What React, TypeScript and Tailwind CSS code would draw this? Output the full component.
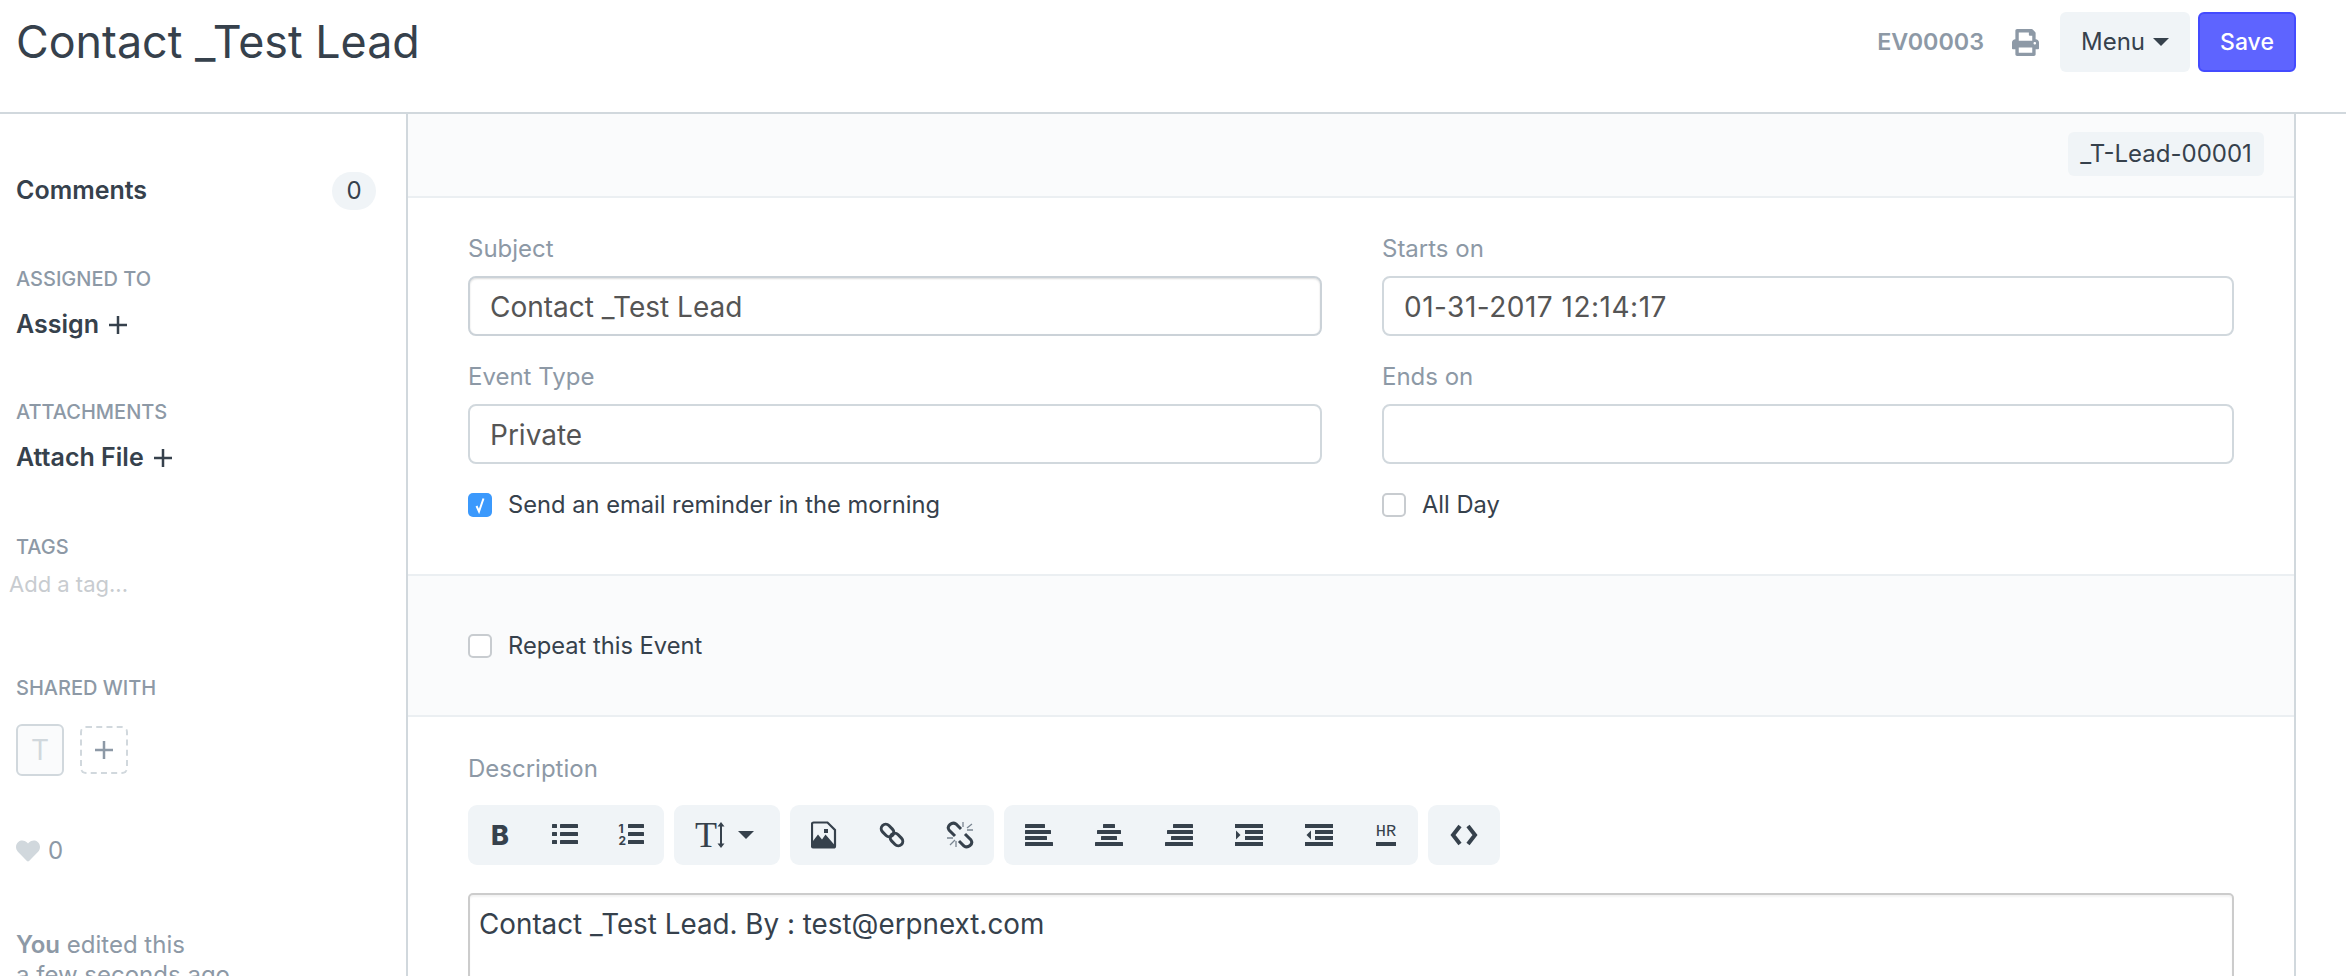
import React from 'react';
import { FaPrint, FaHeart } from 'react-icons/fa';

const Lines = ({ rows, w = 28 }: { rows: number[][]; w?: number }) => (
  <svg width={w} height="24" viewBox={`0 0 ${w} 24`} fill="#36414c">
    {rows.map((r, i) => (
      <rect key={i} x={r[0]} y={r[1]} width={r[2]} height={r[3] ?? 4} rx="0.5" />
    ))}
  </svg>
);

const IndentIcon = ({ left }: { left?: boolean }) => (
  <svg width="28" height="24" viewBox="0 0 28 24" fill="#36414c">
    <rect x="0" y="1" width="28" height="4" />
    <rect x="10" y="7" width="18" height="4" />
    <rect x="10" y="13" width="18" height="4" />
    <rect x="0" y="19" width="28" height="4" />
    {left ? <path d="M6 7.500v9L1.500 12z" /> : <path d="M1 7.500v9L5.500 12z" />}
  </svg>
);

const ImageIcon = () => (
  <svg width="26" height="28" viewBox="0 0 26 28" fill="none">
    <path d="M2.500 1.500h14l7.500 7.500v16q0 1.500-1.500 1.500h-20q-1.500 0-1.500-1.500v-22q0-1.500 1.500-1.500z" stroke="#36414c" strokeWidth="2.200" />
    <path d="M2 26v-6l5-6.500 4 5 3.500-5 9.500 11v1.500z" fill="#36414c" />
    <rect x="13" y="8" width="4" height="4" fill="#36414c" />
  </svg>
);

const LinkIcon = () => (
  <svg width="26" height="26" viewBox="0 0 26 26" fill="none" stroke="#36414c" strokeWidth="3">
    <rect x="1.500" y="4" width="14" height="9" rx="4.500" transform="rotate(45 8.500 8.500)" />
    <rect x="10.500" y="13" width="14" height="9" rx="4.500" transform="rotate(45 17.500 17.500)" />
  </svg>
);

const UnlinkIcon = () => (
  <svg width="28" height="28" viewBox="0 0 28 28" fill="none">
    <path d="M9 15L3 9Q1 6 4 3.500Q7 1 10 3L15 8" stroke="#36414c" strokeWidth="3" />
    <path d="M19 13L25 19Q27 22 24 24.500Q21 27 18 25L13 20" stroke="#36414c" strokeWidth="3" />
    <path d="M17 1v5M21 7l5-4M21 9h6M1 17h6M4 24l5-5M10 20v6" stroke="#7a8591" strokeWidth="1.300" />
  </svg>
);

const CodeIcon = () => (
  <svg width="28" height="22" viewBox="0 0 28 22" fill="none" stroke="#36414c" strokeWidth="4">
    <path d="M10 2L3 11l7 9" />
    <path d="M18 2l7 9-7 9" />
  </svg>
);

const TextHeight = () => (
  <div className="flex items-center">
    <span className="font-['Liberation_Serif',serif] text-[36px] leading-none text-[#36414c]">T</span>
    <svg width="8" height="26" viewBox="0 0 8 26" fill="#36414c">
      <path d="M4 0l3.500 4.500H5v17h2.500L4 26 .5 21.500H3v-17H.5z" />
    </svg>
  </div>
);

const Btn = ({ w, children }: { w: string; children: React.ReactNode }) => (
  <div className={`${w} flex h-full items-center justify-center`}>{children}</div>
);

const Group = ({ w, children }: { w: string; children: React.ReactNode }) => (
  <div className={`${w} flex h-[60px] items-center rounded-[9px] bg-[#f0f4f7]`}>{children}</div>
);

const Field = ({ label, value, focused, wide }: { label: string; value: string; focused?: boolean; wide?: boolean }) => (
  <div>
    <div className="h-[30px] text-[24px] leading-[30px] text-[#8d99a6]">{label}</div>
    <input
      readOnly
      value={value}
      className={`mt-[12px] block h-[60px] w-full rounded-[8px] border-2 bg-white px-[20px] pt-[2px] text-[28px] text-[#555] outline-none ${wide ? 'tracking-[0.5px]' : ''} ${focused ? 'border-[#cbd2d8] shadow-[inset_0_1px_2px_rgba(0,0,0,0.14)]' : 'border-[#d1d8dd]'}`}
    />
  </div>
);

const Check = ({ checked, label, className }: { checked?: boolean; label: string; className?: string }) => (
  <div className={`flex h-[30px] items-center ${className ?? ''}`}>
    {checked ? (
      <span className="flex h-[24px] w-[24px] items-center justify-center rounded-[5px] bg-[#3b99fc]">
        <svg width="14" height="18" viewBox="0 0 14 18" fill="none">
          <path d="M3.500 10l2.500 5.500 4.500-13" stroke="#fff" strokeWidth="2" />
        </svg>
      </span>
    ) : (
      <span className="h-[24px] w-[24px] rounded-[5px] border-2 border-[#c8ccd0] bg-white" />
    )}
    <span className="ml-[16px] text-[23.7px] text-[#36414c]">{label}</span>
  </div>
);

const SideLabel = ({ className, children }: { className: string; children: React.ReactNode }) => (
  <div className={`h-[24px] pl-[16px] text-[20px] font-medium uppercase leading-[24px] text-[#8d99a6] ${className}`}>{children}</div>
);

const PlusThin = () => (
  <svg className="ml-[9px]" width="20" height="20" viewBox="0 0 20 20" stroke="#36414c" strokeWidth="2.500">
    <path d="M10 1v18M1 10h18" />
  </svg>
);

const SideAction = ({ label }: { label: string }) => (
  <div className="mt-[19px] flex h-[30px] items-center pl-[16px] text-[25px] font-semibold text-[#36414c]">
    {label}
    <PlusThin />
  </div>
);

export default function App() {
  return (
    <div className="h-[976px] overflow-hidden bg-white font-['Inter',sans-serif] text-[#36414c]">
      <header className="flex h-[114px] items-start justify-between border-b-2 border-[#d1d8dd]">
        <h1 className="ml-[16px] mt-[17px] text-[44.8px] font-normal leading-[50px]">Contact _Test Lead</h1>
        <div className="mr-[50px] mt-[12px] flex h-[60px] items-center">
          <span className="text-[23.3px] font-semibold text-[#8d99a6]">EV00003</span>
          <FaPrint className="ml-[28px] text-[#8d99a6]" size={27} />
          <div className="ml-[21px] flex h-[60px] w-[130px] items-center justify-center rounded-[6px] bg-[#f0f4f7] text-[24px]">
            Menu
            <svg className="ml-[8px]" width="16" height="8" viewBox="0 0 16 8" fill="#36414c"><path d="M0 0h16L8 8z" /></svg>
          </div>
          <div className="ml-[8px] flex h-[60px] w-[98px] items-center justify-center rounded-[6px] border-2 border-[#444bff] bg-[#5e64ff] text-[23px] font-medium text-white">
            Save
          </div>
        </div>
      </header>

      <div className="flex">
        <aside className="h-[862px] w-[408px] shrink-0 border-r-2 border-[#d1d8dd]">
          <div className="mt-[58px] flex h-[38px] items-center justify-between pl-[16px] pr-[30px]">
            <span className="text-[25px] font-semibold">Comments</span>
            <span className="flex h-[38px] w-[44px] items-center justify-center rounded-full bg-[#f0f4f7] text-[24px]">0</span>
          </div>
          <SideLabel className="mt-[57px]">Assigned To</SideLabel>
          <SideAction label="Assign" />
          <SideLabel className="mt-[60px]">Attachments</SideLabel>
          <SideAction label="Attach File" />
          <SideLabel className="mt-[62px]">Tags</SideLabel>
          <div className="mt-[11px] h-[28px] pl-[9px] text-[22px] leading-[28px] text-[#c8ccd0]">Add a tag...</div>
          <SideLabel className="mt-[78px]">Shared With</SideLabel>
          <div className="mt-[24px] flex items-center pl-[16px]">
            <div className="flex h-[52px] w-[48px] items-center justify-center rounded-[6px] border-2 border-[#d1d8dd] bg-[#fafbfc] text-[28px] text-[#d1d8dd]">T</div>
            <div className="ml-[16px] flex h-[48px] w-[48px] items-center justify-center rounded-[6px] border-2 border-dashed border-[#d1d8dd]">
              <svg width="20" height="20" viewBox="0 0 20 20" stroke="#8d99a6" strokeWidth="2.500"><path d="M10 1v18M1 10h18" /></svg>
            </div>
          </div>
          <div className="mt-[60px] flex h-[30px] items-center pl-[16px]">
            <FaHeart className="text-[#d1d8dd]" size={24} />
            <span className="ml-[8px] text-[24px] text-[#8d99a6]">0</span>
          </div>
          <div className="mt-[64px] pl-[16px] text-[24px] leading-[30px] text-[#8d99a6]">
            <div><span className="font-semibold">You</span> edited this</div>
            <div>a few seconds ago</div>
          </div>
        </aside>

        <main className="h-[862px] w-[1888px] shrink-0 border-r-2 border-[#d1d8dd]">
          <div className="flex h-[84px] items-start justify-end border-b-2 border-[#ebeff2] bg-[#fafbfc] pr-[30px] pt-[18px]">
            <div className="flex h-[44px] w-[196px] items-center justify-center rounded-[6px] bg-[#f0f4f7] text-[24px]">_T-Lead-00001</div>
          </div>

          <section className="h-[378px] border-b-2 border-[#ebeff2] pl-[60px] pt-[36px]">
            <div className="grid grid-cols-[854px_852px] gap-x-[60px]">
              <div>
                <Field label="Subject" value="Contact _Test Lead" focused />
                <div className="mt-[26px]"><Field label="Event Type" value="Private" /></div>
                <Check checked label="Send an email reminder in the morning" className="mt-[26px]" />
              </div>
              <div>
                <Field label="Starts on" value="01-31-2017 12:14:17" wide />
                <div className="mt-[26px]"><Field label="Ends on" value="" /></div>
                <Check label="All Day" className="mt-[26px]" />
              </div>
            </div>
          </section>

          <section className="flex h-[141px] items-center border-b-2 border-[#ebeff2] bg-[#fafbfc] pl-[60px]">
            <Check label="Repeat this Event" />
          </section>

          <section className="pl-[60px] pt-[37px]">
            <div className="h-[30px] text-[24px] leading-[30px] text-[#8d99a6]">Description</div>
            <div className="mt-[21px] flex gap-[10px]">
              <Group w="w-[196px]">
                <Btn w="w-[64px]"><span className="text-[27px] font-extrabold leading-none">B</span></Btn>
                <Btn w="w-[66px]"><Lines w={26} rows={[[0, 1, 5], [8, 1, 18], [0, 9, 5], [8, 9, 18], [0, 17, 5], [8, 17, 18]]} /></Btn>
                <Btn w="w-[66px]">
                  <div className="relative h-[24px] w-[25px]">
                    <span className="absolute left-0 top-[-1px] text-[12px] font-bold leading-[14px]">1</span>
                    <span className="absolute left-0 top-[11px] text-[12px] font-bold leading-[14px]">2</span>
                    <div className="absolute left-[9px] top-0"><Lines w={16} rows={[[0, 1, 16], [0, 9, 16], [0, 17, 16]]} /></div>
                  </div>
                </Btn>
              </Group>
              <Group w="w-[106px]">
                <div className="ml-[21px]"><TextHeight /></div>
                <svg className="ml-[13px]" width="16" height="8" viewBox="0 0 16 8" fill="#36414c"><path d="M0 0h16L8 8z" /></svg>
              </Group>
              <Group w="w-[204px]">
                <Btn w="w-[68px]"><ImageIcon /></Btn>
                <Btn w="w-[68px]"><LinkIcon /></Btn>
                <Btn w="w-[68px]"><UnlinkIcon /></Btn>
              </Group>
              <Group w="w-[414px]">
                <Btn w="w-[70px]"><Lines rows={[[0, 1, 20], [0, 7, 26], [0, 13, 22], [0, 19, 28]]} /></Btn>
                <Btn w="w-[70px]"><Lines rows={[[8, 1, 12], [2, 7, 24], [6, 13, 16], [0, 19, 28]]} /></Btn>
                <Btn w="w-[70px]"><Lines rows={[[8, 1, 20], [2, 7, 26], [6, 13, 22], [0, 19, 28]]} /></Btn>
                <Btn w="w-[70px]"><IndentIcon /></Btn>
                <Btn w="w-[70px]"><IndentIcon left /></Btn>
                <Btn w="w-[64px]">
                  <div className="flex w-[20px] flex-col items-center">
                    <span className="font-['Liberation_Mono',monospace] text-[17px] font-normal leading-[16px]">HR</span>
                    <span className="mt-[2px] h-[4px] w-[20px] bg-[#36414c]" />
                  </div>
                </Btn>
              </Group>
              <Group w="w-[72px]">
                <Btn w="w-full"><CodeIcon /></Btn>
              </Group>
            </div>
            <div className="mt-[28px] h-[200px] w-[1766px] rounded-[5px] border-2 border-[#ccc] px-[9px] pt-[12px] text-[27.8px] leading-[34px] shadow-[inset_0_2px_2px_rgba(0,0,0,0.05)]">
              Contact _Test Lead. By : test@erpnext.com
            </div>
          </section>
        </main>
      </div>
    </div>
  );
}
